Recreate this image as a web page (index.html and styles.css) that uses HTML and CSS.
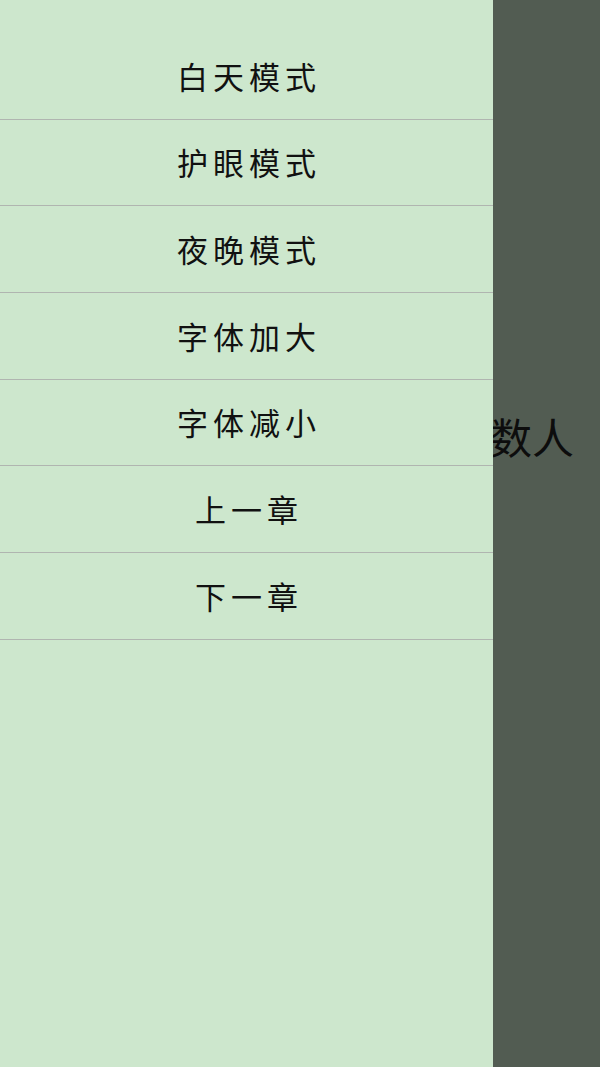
FILE: index.html
```html
<!DOCTYPE html>
<html lang="zh">
<head>
<meta charset="utf-8">
<title>阅读</title>
<link rel="stylesheet" href="styles.css">
</head>
<body>
<div class="page">
  <p class="content">数人</p>
</div>
<nav class="drawer">
  <div class="item">白天模式</div>
  <div class="item">护眼模式</div>
  <div class="item">夜晚模式</div>
  <div class="item">字体加大</div>
  <div class="item">字体减小</div>
  <div class="item">上一章</div>
  <div class="item">下一章</div>
</nav>
</body>
</html>
```
FILE: styles.css
```css
html, body {
  margin: 0;
  padding: 0;
  height: 100%;
}
body {
  font-family: "Noto Sans CJK SC", "Noto Sans CJK JP", sans-serif;
  color: #111;
  overflow: hidden;
}
.page {
  height: 1067px;
  background: #525c52;
  padding-top: 409px;
  box-sizing: border-box;
}
.content {
  margin: 0;
  text-align: right;
  padding-right: 26px;
  font-size: 42px;
  line-height: 54px;
  color: #0d0d0d;
}
.drawer {
  position: absolute;
  z-index: 1;
  left: 0;
  top: 0;
  width: 493px;
  height: 1067px;
  background: #cde7cd;
  padding-top: 33px;
  box-sizing: border-box;
  display: flex;
  flex-direction: column;
}
.item {
  height: 86.67px;
  flex: none;
  box-sizing: border-box;
  border-bottom: 1.5px solid #b0b5b0;
  display: flex;
  align-items: center;
  justify-content: center;
  font-size: 31px;
  letter-spacing: 5px;
  text-indent: 5px;
  padding-bottom: 1px;
}
```
